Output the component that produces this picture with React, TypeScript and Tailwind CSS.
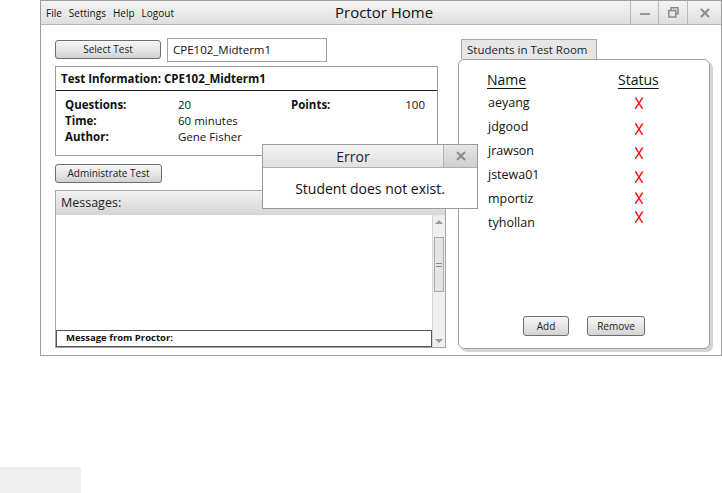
import React from "react";

const students = ["aeyang", "jdgood", "jrawson", "jstewa01", "mportiz", "tyhollan"];

// offsets of the red marks, they don't sit exactly on the name rows
const markTops = [6, 32, 56, 80, 101, 120];

function RedX() {
  return (
    <svg width="10" height="12" viewBox="0 0 10 12" fill="none">
      <path d="M1.8 1 C4 4.5 6 8 8.3 11.2" stroke="#ff1a1a" strokeWidth="1.5" strokeLinecap="round" />
      <path d="M8.5 1 C6 4.5 4 8 1.5 11.2" stroke="#ff1a1a" strokeWidth="1.5" strokeLinecap="round" />
    </svg>
  );
}

function GrayButton({ label, className }: { label: string; className: string }) {
  return (
    <div
      className={`flex items-center justify-center rounded-[3px] border border-[#6e6e6e] bg-gradient-to-b from-[#f7f7f7] via-[#e6e6e6] to-[#d2d2d2] text-[10px] text-[#222] ${className}`}
    >
      {label}
    </div>
  );
}

function Scrollbar() {
  return (
    <div className="flex w-[13px] flex-col items-center border-l border-[#d6d6d6] bg-[#efefef]">
      <div className="flex h-[13px] w-full items-center justify-center">
        <div className="h-0 w-0 border-x-[4px] border-b-[4px] border-x-transparent border-b-[#9a9a9a]" />
      </div>
      <div className="mt-[9px] flex h-[55px] w-[10px] flex-col items-center justify-center gap-[2px] border border-[#a8a8a8] bg-[#e4e4e4]">
        <div className="h-px w-[6px] bg-[#8a8a8a]" />
        <div className="h-px w-[6px] bg-[#8a8a8a]" />
      </div>
      <div className="flex-1" />
      <div className="flex h-[13px] w-full items-center justify-center">
        <div className="h-0 w-0 border-x-[4px] border-t-[4px] border-x-transparent border-t-[#9a9a9a]" />
      </div>
    </div>
  );
}

export default function App() {
  return (
    <div className="relative h-[493px] w-[722px] overflow-hidden bg-white text-[#111]" style={{ fontFamily: '"Open Sans", "Noto Sans", sans-serif' }}>
      {/* Window */}
      <div className="ml-[40px] h-[356px] w-[682px] border border-[#9c9c9c] bg-white">
        {/* Title bar */}
        <div className="relative flex h-[24px] items-center border-b border-[#b4b4b4] bg-gradient-to-b from-[#f5f5f5] to-[#dedede]">
          <div className="mt-[1px] flex gap-[7px] pl-[5px] text-[10px] text-[#111]">
            <span>File</span>
            <span>Settings</span>
            <span>Help</span>
            <span>Logout</span>
          </div>
          <div className="absolute left-[294px] top-0 text-[15px] leading-[23px] text-[#111]">Proctor Home</div>
          <div className="ml-auto flex h-full">
            <div className="flex w-[28px] items-center justify-center border-l border-[#b8b8b8]">
              <div className="mt-[2px] h-[2px] w-[10px] bg-[#9a9a9a]" />
            </div>
            <div className="flex w-[29px] items-center justify-center border-l border-[#b8b8b8]">
              <svg width="11" height="11" viewBox="0 0 11 11" fill="none">
                <rect x="3" y="0.75" width="7" height="6" stroke="#8a8a8a" strokeWidth="1.5" />
                <rect x="0.75" y="3.5" width="7" height="6.5" fill="#e8e8e8" stroke="#8a8a8a" strokeWidth="1.5" />
              </svg>
            </div>
            <div className="flex w-[34px] items-center justify-center border-l border-[#b8b8b8]">
              <svg width="10" height="10" viewBox="0 0 10 10">
                <path d="M1 1 L9 9 M9 1 L1 9" stroke="#8a8a8a" strokeWidth="2" />
              </svg>
            </div>
          </div>
        </div>

        {/* Body */}
        <div className="flex pl-[14px] pt-[13px]">
          {/* Left column */}
          <div className="flex w-[390px] flex-col">
            <div className="flex items-start">
              <GrayButton label="Select Test" className="mt-[2px] h-[19px] w-[106px]" />
              <div className="ml-[6px] flex h-[24px] w-[160px] items-center border border-[#a3a3a3] pl-[5px] text-[11.5px]">
                CPE102_Midterm1
              </div>
            </div>

            <div className="mt-[4px] h-[90px] w-[383px] border border-[#9a9a9a]">
              <div className="flex h-[24px] items-center border-b border-[#222] pl-[5px] text-[11.5px] font-bold">
                Test Information: CPE102_Midterm1
              </div>
              <div className="grid grid-cols-[113px_113px_1fr_auto] pl-[9px] pr-[12px] pt-[6px] text-[11.5px] leading-[16px]">
                <span className="font-bold">Questions:</span>
                <span>20</span>
                <span className="font-bold">Points:</span>
                <span className="text-right">100</span>
                <span className="font-bold">Time:</span>
                <span>60 minutes</span>
                <span />
                <span />
                <span className="font-bold">Author:</span>
                <span>Gene Fisher</span>
                <span />
                <span />
              </div>
            </div>

            <GrayButton label="Administrate Test" className="mt-[8px] h-[19px] w-[107px]" />

            <div className="mt-[7px] flex h-[158px] w-[391px] flex-col border border-[#a6a6a6]">
              <div className="flex h-[24px] items-center bg-gradient-to-b from-[#f2f2f2] to-[#d6d6d6] pl-[5px] text-[12.5px] text-[#222]">
                Messages:
              </div>
              <div className="flex flex-1">
                <div className="flex flex-1 flex-col justify-end">
                  <div className="flex h-[17px] items-center border border-[#555] pl-[9px] text-[9.5px] font-bold">
                    Message from Proctor:
                  </div>
                </div>
                <Scrollbar />
              </div>
            </div>
          </div>

          {/* Right column */}
          <div className="ml-[13px] flex flex-col pt-[1px]">
            <div className="ml-[3px] flex h-[20px] w-[136px] items-center border border-b-0 border-[#a8a8a8] bg-[#e6e6e6] pl-[5px] text-[11.5px] text-[#222]">
              Students in Test Room
            </div>
            <div className="flex h-[290px] w-[252px] flex-col rounded-[6px] border border-[#a0a0a0] bg-white shadow-[3px_3px_0_#d4d4d4]">
              <div className="flex pl-[28px] pt-[9px] text-[14px]">
                <span className="w-[131px] underline underline-offset-[3px]">Name</span>
                <span className="underline underline-offset-[3px]">Status</span>
              </div>
              <div className="mt-[1px] flex">
                <div className="flex w-[140px] flex-col pl-[29px] text-[12.5px] leading-[24px]">
                  {students.map((s) => (
                    <span key={s}>{s}</span>
                  ))}
                </div>
                <div className="relative flex-1">
                  {markTops.map((t, i) => (
                    <div key={i} className="absolute left-[35px]" style={{ top: t }}>
                      <RedX />
                    </div>
                  ))}
                </div>
              </div>
              <div className="mt-auto mb-[12px] flex gap-[18px] pl-[64px]">
                <GrayButton label="Add" className="h-[20px] w-[46px]" />
                <GrayButton label="Remove" className="h-[20px] w-[58px]" />
              </div>
            </div>
          </div>
        </div>
      </div>

      {/* Error dialog */}
      <div className="absolute left-[262px] top-[144px] w-[216px] border border-[#9a9a9a] bg-white">
        <div className="flex h-[23px] border-b border-[#b0b0b0]">
          <div className="flex flex-1 items-center justify-center bg-gradient-to-b from-[#f4f4f4] to-[#e0e0e0] text-[14px] text-[#222]">
            Error
          </div>
          <div className="flex w-[34px] items-center justify-center border-l border-[#b0b0b0] bg-gradient-to-b from-[#e6e6e6] to-[#cfcfcf]">
            <svg width="10" height="10" viewBox="0 0 10 10">
              <path d="M1 1 L9 9 M9 1 L1 9" stroke="#8a8a8a" strokeWidth="2" />
            </svg>
          </div>
        </div>
        <div className="flex h-[40px] items-center justify-center text-[14px] text-[#111]">
          Student does not exist.
        </div>
      </div>

      {/* Stray gray block */}
      <div className="absolute left-0 top-[467px] h-[26px] w-[81px] bg-[#f0f0f0]" />
    </div>
  );
}
